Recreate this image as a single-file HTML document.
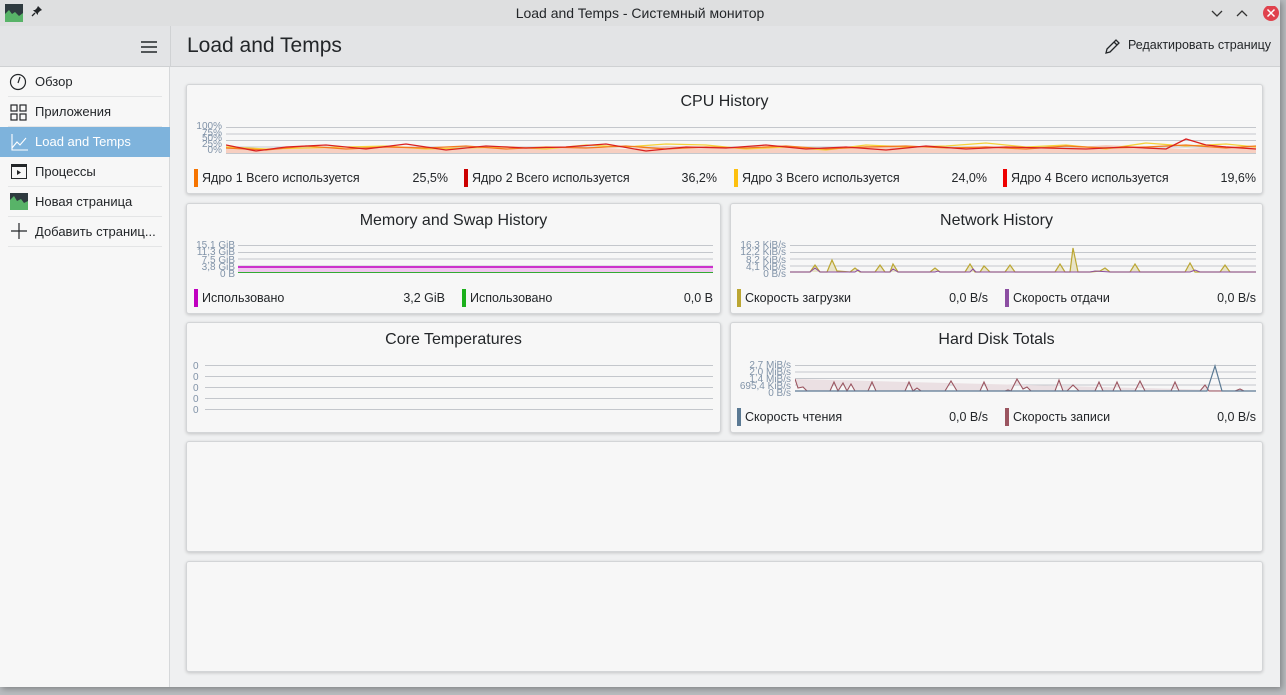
<!DOCTYPE html>
<html><head><meta charset="utf-8"><style>
*{box-sizing:border-box;margin:0;padding:0}
body{width:1286px;height:695px;overflow:hidden;background:#b9bcbf;font-family:"Liberation Sans","DejaVu Sans",sans-serif;color:#232629;position:relative}
.a{position:absolute}
.win{left:0;top:0;width:1280px;height:687px;background:#eff0f1;box-shadow:2px 2px 6px rgba(0,0,0,.3)}
.tb{left:0;top:0;width:1280px;height:26px;background:#dedfe0;font-size:14px;text-align:center;line-height:26px}
.hdr{left:0;top:26px;width:1280px;height:41px;background:#e3e4e6;border-bottom:1px solid #cfd1d3}
.side{left:0;top:67px;width:170px;height:620px;background:#f7f7f7;border-right:1px solid #d6d8da}
.it{position:absolute;left:0;width:170px;height:30px;font-size:13px;line-height:30px;padding-left:35px}
.sep{position:absolute;left:8px;width:154px;height:1px;background:#e4e5e6}
.card{position:absolute;background:#f7f7f7;border:1px solid #d3d5d7;border-radius:3px;box-shadow:0 1px 3px rgba(0,0,0,.18)}
.ct{position:absolute;left:0;right:0;text-align:center;font-size:16px;top:8px}
.lg{position:absolute;font-size:12.5px;line-height:16px;height:16px}
.lg i{position:absolute;left:0;top:-1px;width:4px;height:18px}
.lg span{position:absolute;left:8px;white-space:nowrap}
.lg b{position:absolute;right:0;font-weight:normal}
.yl{position:absolute;font-size:10px;color:#8193a8;text-align:right;line-height:10px}
</style></head><body>
<div class="a win"></div>
<div class="a tb">Load and Temps - Системный монитор</div>
<svg class="a" style="left:5px;top:4px" width="18" height="18"><rect width="18" height="18" fill="#2e3a3f"/><path d="M0 10 L4 6 L7 10 L10 8 L14 12 L18 9 L18 18 L0 18Z" fill="#58b368"/></svg>
<svg class="a" style="left:31px;top:5px" width="12" height="12"><path d="M7 1 L11 5 L9 6 L7 8 L7 10 L2 5 L4 5 L6 3Z" fill="#232629"/><path d="M4 8 L1 11" stroke="#232629" stroke-width="1.3"/></svg>
<svg class="a" style="left:1210px;top:6px" width="70" height="16"><path d="M2 5 L7 10 L12 5" stroke="#333" fill="none" stroke-width="1.3"/><path d="M27 10 L32 5 L37 10" stroke="#333" fill="none" stroke-width="1.3"/><circle cx="61" cy="7" r="8" fill="#e0424d"/><path d="M57.5 3.5 L64.5 10.5 M64.5 3.5 L57.5 10.5" stroke="#fff" stroke-width="1.5"/></svg>
<div class="a hdr"></div>
<div class="a" style="left:170px;top:26px;width:1px;height:41px;background:#d0d2d4"></div>
<svg class="a" style="left:141px;top:40px" width="16" height="14"><path d="M0 2H16M0 7H16M0 12H16" stroke="#232629" stroke-width="1.6"/></svg>
<div class="a" style="left:187px;top:34px;font-size:21px">Load and Temps</div>
<svg class="a" style="left:1104px;top:38px" width="17" height="17"><path d="M2 15 L3 11 L12 2 L15 5 L6 14 Z M10 4 L13 7" stroke="#232629" fill="none" stroke-width="1.3"/></svg>
<div class="a" style="left:1128px;top:38px;font-size:12.5px">Редактировать страницу</div>
<div class="a side">
<div class="it" style="top:0">Обзор</div><div class="sep" style="top:29px"></div>
<div class="it" style="top:30px">Приложения</div><div class="sep" style="top:59px"></div>
<div class="it" style="top:60px;background:#7eb3dc;color:#fff">Load and Temps</div>
<div class="it" style="top:90px">Процессы</div><div class="sep" style="top:119px"></div>
<div class="it" style="top:120px">Новая страница</div><div class="sep" style="top:149px"></div>
<div class="it" style="top:150px">Добавить страниц...</div><div class="sep" style="top:179px"></div>
</div>
<svg class="a" style="left:9px;top:72px" width="20" height="170">
<circle cx="9" cy="10" r="7.5" stroke="#232629" fill="none" stroke-width="1.2"/><path d="M9 11 L11 5" stroke="#232629" stroke-width="1.2"/>
<g fill="none" stroke="#232629" stroke-width="1.2"><rect x="2" y="33" width="6" height="6"/><rect x="11" y="33" width="6" height="6"/><rect x="2" y="42" width="6" height="6"/><rect x="11" y="42" width="6" height="6"/></g>
<path d="M3 62 V78 H19 M3 76 L8 70 L11 73 L17 66" stroke="#fff" fill="none" stroke-width="1.1"/>
<rect x="2.5" y="92.5" width="15" height="14" stroke="#232629" fill="none"/><rect x="2" y="92" width="16" height="3" fill="#232629"/><path d="M8 98 L12 100.5 L8 103Z" fill="#232629"/>
<rect x="1" y="121" width="18" height="17" fill="#2e3a3f"/><path d="M1 128 L5 124 L8 129 L12 127 L15 131 L19 129 L19 138 L1 138Z" fill="#58b368"/>
<path d="M10 151 V167 M2 159 H18" stroke="#232629" stroke-width="1.2"/>
</svg>

<div class="card" style="left:186px;top:84px;width:1077px;height:110px"><div class="ct">CPU History</div></div>
<div class="yl" style="left:190px;top:122px;width:32px">100%<br><span style="position:relative;top:-3px">75%</span></div>
<div class="yl" style="left:190px;top:136px;width:32px;line-height:6px">50%<br>25%<br>0%</div>
<svg class="a" style="left:226px;top:125px" width="1030" height="30">
<g stroke="#c4c7cc" stroke-width="1"><path d="M0 2.5H1030M0 9H1030M0 15.5H1030M0 22H1030M0 28.5H1030"/></g>
<polygon fill="#f6b49c" opacity=".6" points="0,21 40,25 80,22 120,23 160,21 200,22 240,24 280,21 320,23 360,22 400,24 440,21 480,22 520,23 560,22 600,25 640,21 680,22 720,24 760,21 800,22 840,23 880,20 920,22 960,24 1000,21 1030,22 1030,28 0,28"/>
<polyline fill="none" stroke="#f6d23a" stroke-width="1.3" points="0,22 40,24 80,23 120,22 160,21 200,24 240,23 280,22 320,24 360,20 400,22 440,19 480,20 520,24 560,22 600,25 640,20 680,22 720,21 760,18 800,22 840,20 880,24 920,18 960,21 1000,19 1030,22"/>
<polyline fill="none" stroke="#f47a1f" stroke-width="1.3" points="0,23 40,25 80,21 120,24 160,22 200,23 240,21 280,24 320,22 360,23 400,21 440,24 480,22 520,23 560,21 600,24 640,22 680,21 720,23 760,22 800,24 840,21 880,23 920,22 960,20 1000,23 1030,21"/>
<polyline fill="none" stroke="#da2020" stroke-width="1.3" points="0,20 30,26 60,22 100,20 140,24 180,19 220,25 260,21 300,23 340,22 380,19 420,26 460,22 500,23 540,20 580,24 620,22 660,25 700,21 740,24 780,22 820,23 860,24 900,22 940,24 960,14 980,20 1000,22 1030,24"/>
</svg>
<div class="lg" style="left:194px;top:170px;width:254px"><i style="background:#f67400"></i><span>Ядро 1 Всего используется</span><b>25,5%</b></div>
<div class="lg" style="left:464px;top:170px;width:253px"><i style="background:#c00"></i><span>Ядро 2 Всего используется</span><b>36,2%</b></div>
<div class="lg" style="left:734px;top:170px;width:253px"><i style="background:#fdc00f"></i><span>Ядро 3 Всего используется</span><b>24,0%</b></div>
<div class="lg" style="left:1003px;top:170px;width:253px"><i style="background:#e00"></i><span>Ядро 4 Всего используется</span><b>19,6%</b></div>

<div class="card" style="left:186px;top:203px;width:535px;height:111px"><div class="ct">Memory and Swap History</div></div>
<div class="yl" style="left:192px;top:242px;width:43px;line-height:7.3px">15,1 GiB<br>11,3 GiB<br>7,5 GiB<br>3,8 GiB<br>0 B</div>
<svg class="a" style="left:238px;top:243px" width="475" height="32">
<g stroke="#c4c7cc"><path d="M0 2.5H475M0 9.5H475M0 16H475M0 23H475"/></g>
<rect x="0" y="23" width="475" height="6" fill="#f0c6ef"/><path d="M0 24H475" stroke="#c000c0" stroke-width="1.5"/><path d="M0 29.5H475" stroke="#3a3" stroke-width="1"/>
</svg>
<div class="lg" style="left:194px;top:290px;width:251px"><i style="background:#c000c0"></i><span>Использовано</span><b>3,2 GiB</b></div>
<div class="lg" style="left:462px;top:290px;width:251px"><i style="background:#1cb01c"></i><span>Использовано</span><b>0,0 B</b></div>

<div class="card" style="left:730px;top:203px;width:533px;height:111px"><div class="ct">Network History</div></div>
<div class="yl" style="left:735px;top:242px;width:51px;line-height:7.3px">16,3 KiB/s<br>12,2 KiB/s<br>8,2 KiB/s<br>4,1 KiB/s<br>0 B/s</div>
<svg class="a" style="left:790px;top:243px" width="466" height="32">
<g stroke="#c4c7cc"><path d="M0 2.5H466M0 9.5H466M0 16H466M0 23H466"/></g>
<polyline fill="#e8e4c8" stroke="#bba633" stroke-width="1.2" points="0,29 20,29 25,22 30,29 37,29 42,17 47,28 60,29 65,25 70,29 85,29 90,22 95,29 100,29 103,21 108,29 140,29 145,25 150,29 175,29 180,21 185,29 190,29 194,23 200,29 215,29 220,22 225,29 265,29 270,21 275,29 280,29 283,5 288,29 300,29 310,28 315,25 320,29 340,29 345,21 350,29 395,29 395,29 400,20 405,29 430,29 435,22 440,29 470,29 476,24 480,29 505,29 510,29 510,29"/>
<polyline fill="none" stroke="#8c4ea2" stroke-width="1" points="0,29 20,29 25,25 30,29 65,29 68,27 71,29 100,29 103,26 108,29 145,29 148,28 150,29 180,29 183,26 186,29 300,29 305,28 320,29 400,29 405,27 410,29 466,29"/>
</svg>
<div class="lg" style="left:737px;top:290px;width:251px"><i style="background:#bba633"></i><span>Скорость загрузки</span><b>0,0 B/s</b></div>
<div class="lg" style="left:1005px;top:290px;width:251px"><i style="background:#8c4ea2"></i><span>Скорость отдачи</span><b>0,0 B/s</b></div>

<div class="card" style="left:186px;top:322px;width:535px;height:111px"><div class="ct">Core Temperatures</div></div>
<div class="yl" style="left:193px;top:361px;width:9px;line-height:11px;text-align:left">0<br>0<br>0<br>0<br>0</div>
<svg class="a" style="left:205px;top:360px" width="508" height="52"><g stroke="#c4c7cc"><path d="M0 5.5H508M0 16.5H508M0 27.5H508M0 38.5H508M0 49.5H508"/></g></svg>

<div class="card" style="left:730px;top:322px;width:533px;height:111px"><div class="ct">Hard Disk Totals</div></div>
<div class="yl" style="left:735px;top:362px;width:56px;line-height:7px">2,7 MiB/s<br>2,0 MiB/s<br>1,4 MiB/s<br>695,4 KiB/s<br>0 B/s</div>
<svg class="a" style="left:795px;top:363px" width="461" height="32">
<g stroke="#c4c7cc"><path d="M0 2.5H461M0 9H461M0 15.5H461M0 22H461"/></g>
<polyline fill="#ebe0e3" stroke="#9b5560" stroke-width="1.1" points="0,16 3,25 8,24 12,28 35,28 39,19 43,28 48,20 52,28 56,21 60,28 73,28 77,19 81,28 110,28 114,19 118,28 122,25 126,28 150,28 156,18 162,28 185,28 189,19 193,28 210,28 213,27 216,28 222,16 228,26 232,24 236,28 260,28 264,17 268,28 272,28 278,22 284,28 300,28 304,19 308,28 318,28 322,19 326,28 340,28 345,18 350,28 376,28 380,19 384,28 405,28 410,22 414,28 440,28 445,26 449,28 461,28"/>
<polyline fill="none" stroke="#5b7a94" stroke-width="1.2" points="0,28 405,28 412,28 420,3 427,28 461,28"/>
</svg>
<div class="lg" style="left:737px;top:409px;width:251px"><i style="background:#5b7a94"></i><span>Скорость чтения</span><b>0,0 B/s</b></div>
<div class="lg" style="left:1005px;top:409px;width:251px"><i style="background:#9b5560"></i><span>Скорость записи</span><b>0,0 B/s</b></div>

<div class="card" style="left:186px;top:441px;width:1077px;height:111px"></div>
<div class="card" style="left:186px;top:561px;width:1077px;height:111px"></div>
</body></html>
